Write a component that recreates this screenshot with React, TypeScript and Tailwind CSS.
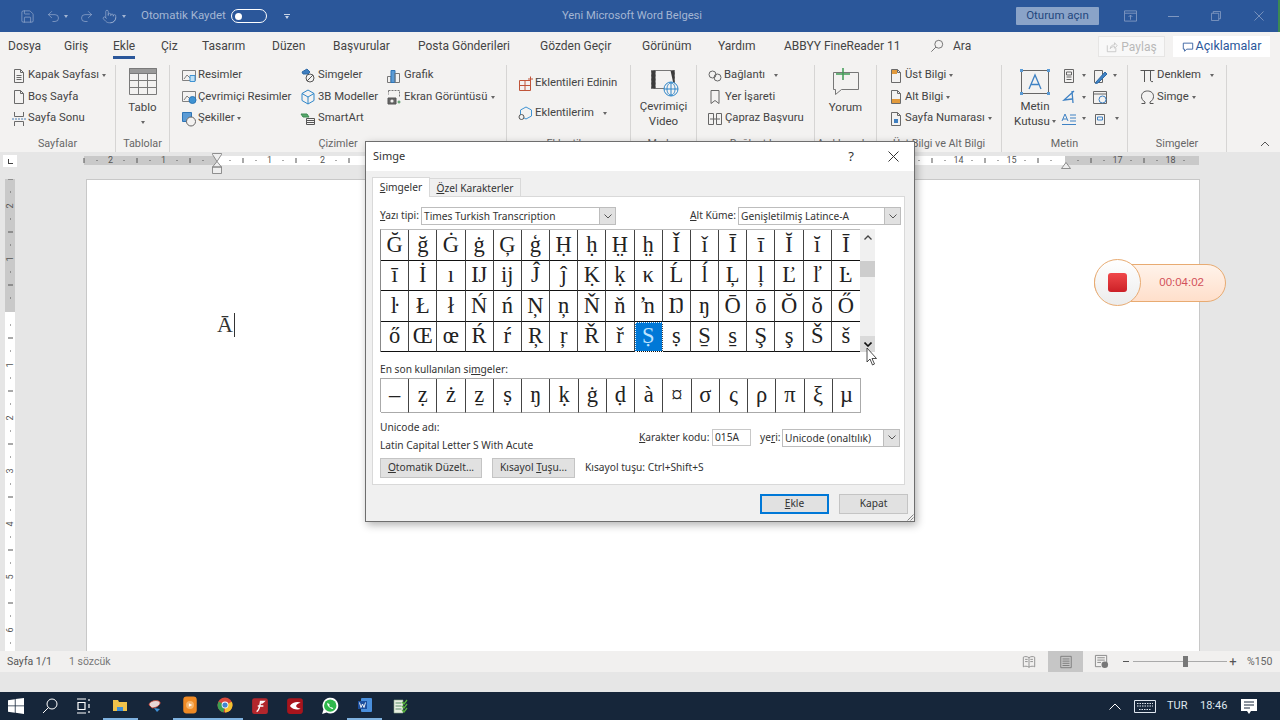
import type { ReactNode } from "react";
import { Pointer, Redo2, Save, Undo2 } from "lucide-react";

const tabs = [
  { label: "Dosya", w: "w-[56px]" },
  { label: "Giriş", w: "w-[49px]" },
  { label: "Ekle", w: "w-[48px]", active: true },
  { label: "Çiz", w: "w-[41px]" },
  { label: "Tasarım", w: "w-[70px]" },
  { label: "Düzen", w: "w-[61px]" },
  { label: "Başvurular", w: "w-[85px]" },
  { label: "Posta Gönderileri", w: "w-[122px]" },
  { label: "Gözden Geçir", w: "w-[102px]" },
  { label: "Görünüm", w: "w-[76px]" },
  { label: "Yardım", w: "w-[66px]" },
  { label: "ABBYY FineReader 11", w: "w-[146px]" },
];

const symbols = [
  "Ğ", "ğ", "Ġ", "ġ", "Ģ", "ģ", "Ḥ", "ḥ", "H̤", "h̤", "Ǐ", "ǐ", "Ī", "ī", "Ĭ", "ĭ", "Ī",
  "ī", "İ", "ı", "Ĳ", "ĳ", "Ĵ", "ĵ", "Ḳ", "ḳ", "κ", "Ĺ", "ĺ", "Ļ", "ļ", "Ľ", "ľ", "Ŀ",
  "ŀ", "Ł", "ł", "Ń", "ń", "Ņ", "ņ", "Ň", "ň", "ŉ", "Ŋ", "ŋ", "Ō", "ō", "Ŏ", "ŏ", "Ő",
  "ő", "Œ", "œ", "Ŕ", "ŕ", "Ŗ", "ŗ", "Ř", "ř", "Ṣ", "ṣ", "S̱", "s̱", "Ş", "ş", "Š", "š",
];
const recent = ["–", "ẓ", "ż", "ẕ", "ṣ", "ŋ", "ḳ", "ġ", "ḍ", "à", "¤", "σ", "ς", "ρ", "π", "ξ", "µ"];

function Ico({ children, className = "h-4 w-4" }: { children: ReactNode; className?: string }) {
  return (
    <svg viewBox="0 0 16 16" className={`shrink-0 ${className}`} fill="none" stroke="#6a6a6a" strokeWidth="1">
      {children}
    </svg>
  );
}

const Page = ({ fold = true }: { fold?: boolean }) => (
  <path d={fold ? "M3.5 1.5h6l3 3v10h-9z M9.5 1.5v3h3" : "M3.5 1.5h9v13h-9z"} />
);

function Caret({ className = "" }: { className?: string }) {
  return <span className={`inline-block h-0 w-0 border-x-[2.5px] border-t-[3px] border-x-transparent border-t-[#666] ${className}`} />;
}

function Row({ icon, label, caret, gap = "gap-[1px]", w }: { icon: ReactNode; label: string; caret?: "near" | "far"; gap?: string; w?: string }) {
  return (
    <div className={`flex h-[21.5px] items-center whitespace-nowrap ${gap} ${w ?? ""}`}>
      {icon}
      <span>{label}</span>
      {caret === "near" && <Caret className="ml-[2px]" />}
      {caret === "far" && <Caret className="ml-[8px]" />}
    </div>
  );
}

function Group({ w, label, children, cls = "" }: { w: string; label: string; children: ReactNode; cls?: string }) {
  return (
    <div className={`flex h-[87px] flex-col border-r border-[#d6d5d4] ${w}`}>
      <div className={`h-[71px] ${cls}`}>{children}</div>
      <div className="h-[16px] text-center text-[10.8px] leading-[16px] text-[#666]">{label}</div>
    </div>
  );
}

function TitleBar() {
  return (
    <div className="flex h-8 items-center border-r-2 border-[#3c8a52] bg-[#2b579a] text-[11.5px] text-[#a4b6d3]">
      <Save className="ml-[20px] h-[15px] w-[15px]" strokeWidth={1} />
      <Undo2 className="ml-[11px] h-[15px] w-[15px]" strokeWidth={1} />
      <Caret className="ml-[3px] border-t-[#a4b6d3]" />
      <Redo2 className="ml-[11px] h-[15px] w-[15px]" strokeWidth={1} />
      <Pointer className="ml-[8px] h-[15px] w-[15px]" strokeWidth={1} />
      <Caret className="ml-[5px] border-t-[#a4b6d3]" />
      <span className="ml-[15px] w-[90px] whitespace-nowrap">Otomatik Kaydet</span>
      <span className="flex h-[14px] w-[36px] items-center rounded-full border border-white pl-[3px]">
        <span className="h-[7px] w-[7px] rounded-full bg-white" />
      </span>
      <span className="ml-[16px] flex w-[8px] flex-col items-center gap-[1px]">
        <span className="h-px w-[6px] bg-[#c8d4e6]" />
        <Caret className="border-t-[#c8d4e6]" />
      </span>
      <span className="ml-[271px] w-[140px] whitespace-nowrap text-center text-[11.2px]">Yeni Microsoft Word Belgesi</span>
      <span className="ml-[314px] flex h-[18px] w-[83px] items-center justify-center rounded-[1px] bg-[#8aa3c8] text-[#23477e]">Oturum açın</span>
      <svg viewBox="0 0 14 12" className="ml-[25px] h-[12px] w-[13px]" fill="none" stroke="#7f97c0">
        <path d="M.5.5h13v11H.5z M.5 3h13 M7 10V5 M5 7l2-2 2 2" />
      </svg>
      <span className="ml-[31px] h-px w-[11px] bg-[#7f97c0]" />
      <svg viewBox="0 0 11 11" className="ml-[32px] h-[10px] w-[10px]" fill="none" stroke="#7f97c0">
        <path d="M.5 2.5h8v8h-8z M2.5 2.5v-2h8v8h-2" />
      </svg>
      <svg viewBox="0 0 11 11" className="ml-[33px] h-[10px] w-[10px]" fill="none" stroke="#7f97c0">
        <path d="M.5.5l10 10 M10.5.5l-10 10" />
      </svg>
    </div>
  );
}

function TabRow() {
  return (
    <div className="flex h-[30px] items-start bg-[#f3f2f1] pl-[8px] text-[12px] text-[#444]">
      {tabs.map((t) => (
        <div key={t.label} className={`flex pt-[7px] ${t.w}`}>
          <span className={`h-[20px] whitespace-nowrap leading-[14px] ${t.active ? "border-b-[3px] border-[#2b579a]" : ""}`}>{t.label}</span>
        </div>
      ))}
      <div className="flex items-center pt-[7px]">
        <svg viewBox="0 0 16 16" className="h-[14px] w-[14px]" fill="none" stroke="#666">
          <circle cx="10" cy="6" r="4.5" />
          <path d="M6.8 9.2L1.5 14.5" />
        </svg>
        <span className="ml-[9px] leading-[14px]">Ara</span>
      </div>
      <div className="ml-auto flex items-center gap-[8px] pr-[10px] pt-[4px]">
        <div className="flex h-[21px] w-[67px] items-center justify-center gap-[3px] border border-[#e6e5e4] bg-[#f8f8f8] text-[#b9b9b9]">
          <svg viewBox="0 0 14 14" className="h-[12px] w-[12px]" fill="none" stroke="#c4c4c4">
            <path d="M1.5 5v7.5h10V8 M5 9c0-3 2-4.500 5-4.500V2l3 3.500-3 3V6.500C8 6.500 6 7 5 9z" />
          </svg>
          Paylaş
        </div>
        <div className="flex h-[21px] w-[97px] items-center justify-center gap-[2px] bg-white text-[12.5px] text-[#2b579a]">
          <svg viewBox="0 0 14 14" className="h-[12px] w-[12px]" fill="none" stroke="#2b579a">
            <path d="M1.500 2.500h11v7h-7l-2.500 2.500v-2.500h-1.500z" />
          </svg>
          Açıklamalar
        </div>
      </div>
    </div>
  );
}

function Ribbon() {
  return (
    <div className="flex h-[90px] bg-[#f3f2f1] pt-[3px] text-[11.3px] text-[#444]">
      <Group w="w-[116px]" label="Sayfalar" cls="pl-[11px]">
        <Row label="Kapak Sayfası" caret="near" icon={<Ico><Page /><path d="M5.500 7.500h5 M5.500 9.500h5 M5.500 11.500h5" /></Ico>} />
        <Row label="Boş Sayfa" icon={<Ico><Page /></Ico>} />
        <Row label="Sayfa Sonu" icon={<Ico><path d="M3.500 1v4.500h9V1 M3.500 15v-4.500h9V15" /><path d="M1 8h14" strokeDasharray="2 1" stroke="#4a7fb5" /></Ico>} />
      </Group>

      <Group w="w-[54px]" label="Tablolar" cls="flex flex-col items-center pt-[3px]">
        <svg viewBox="0 0 28 27" className="h-[27px] w-[28px]" fill="none" stroke="#7a7a7a">
          <path d="M.5.5h27v26H.5z" />
          <path d="M.5.5h27v5H.5z" fill="#9a9a9a" />
          <path d="M9.500 5.500v21 M18.500 5.500v21 M.5 12.500h27 M.5 19.500h27" />
        </svg>
        <span className="mt-[4px] text-[11.5px] leading-[16px]">Tablo</span>
        <Caret className="mt-[6px]" />
      </Group>

      <Group w="w-[337px]" label="Çizimler" cls="flex pl-[11px]">
        <div className="w-[119px]">
          <Row label="Resimler" icon={<Ico><path d="M1.500 2.500h13v10h-13z" stroke="#808080" /><path d="M3 11l3-4 3 3" stroke="#808080" /><path d="M9 7.500h5v6H9z" fill="#bfe0f5" stroke="#3f93d3" /></Ico>} />
          <Row label="Çevrimiçi Resimler" icon={<Ico><path d="M1.500 2.500h13v10h-13z" stroke="#808080" /><path d="M3 11l3-4 3 3" stroke="#808080" /><circle cx="11.500" cy="11" r="3.500" fill="#3f93d3" stroke="#2c76b5" /></Ico>} />
          <Row label="Şekiller" caret="near" icon={<Ico><path d="M1.500 1.500h9v9h-9z" fill="#5b9bd5" stroke="#2e75b6" /><circle cx="10" cy="10.500" r="4.500" fill="#f3f2f1" stroke="#666" /></Ico>} />
        </div>
        <div className="w-[86px]">
          <Row label="Simgeler" gap="gap-[2px]" icon={<Ico><path d="M2 4l5-3 3 3-2 2H3z" fill="#3f7fc0" stroke="#2e6aa6" /><circle cx="10" cy="10" r="4" stroke="#555" /><path d="M7 13l6-6" stroke="#555" /></Ico>} />
          <Row label="3B Modeller" gap="gap-[2px]" icon={<Ico><path d="M8 1l6 3.500v7L8 15l-6-3.500v-7z" stroke="#2e86c9" /><path d="M2 4.500L8 8l6-3.500 M8 8v7" stroke="#2e86c9" /></Ico>} />
          <Row label="SmartArt" gap="gap-[2px]" icon={<Ico><path d="M1 3h6l2 3H3z" fill="#56a86a" stroke="#3e8a52" /><path d="M6.500 7.500h8v6h-8z M6.500 9.500h8 M6.500 11.500h8" stroke="#555" /></Ico>} />
        </div>
        <div>
          <Row label="Grafik" gap="gap-[2px]" icon={<Ico><path d="M1.500 8.500h3.500v6H1.500z" stroke="#777" /><path d="M5 2.500h4v12H5z" fill="#5b9bd5" stroke="#2e75b6" /><path d="M9 5.500h4.500v9H9z" stroke="#777" /></Ico>} />
          <Row label="Ekran Görüntüsü" caret="near" gap="gap-[2px]" icon={<Ico><path d="M2.500 1.500h11v6M2.500 1.500v4" strokeDasharray="2 1" stroke="#777" /><path d="M2 9h8v6H2z" fill="#666" stroke="#555" /><circle cx="6" cy="12" r="1.600" fill="#f3f2f1" stroke="none" /><path d="M11.500 13h3 M13 11.500v3" stroke="#3e8a52" /></Ico>} />
        </div>
      </Group>

      <Group w="w-[124px]" label="Eklentiler" cls="pl-[11px]">
        <div className="mt-[8px]">
          <Row label="Eklentileri Edinin" icon={<Ico><path d="M1.500 4.500h11v10h-11z M1.500 9.500h11 M7 4.500v10" stroke="#c0553a" /><path d="M12.500.5v5 M10 3h5" stroke="#c0553a" /></Ico>} />
        </div>
        <div className="mt-[8px]">
          <Row label="Eklentilerim" caret="far" icon={<Ico><path d="M8 2l5.500 3v6L8 14l-5.500-3V5z" stroke="#3f93d3" /><circle cx="3.500" cy="12" r="2.500" fill="#f3f2f1" stroke="#555" /></Ico>} />
        </div>
      </Group>

      <Group w="w-[66px]" label="Medya" cls="flex flex-col items-center pt-[4px]">
        <svg viewBox="0 0 30 28" className="h-[28px] w-[30px]" fill="none" stroke="#777">
          <path d="M2.500 1.500h23v18h-23z" />
          <path d="M2.500 1.500h4v18h-4z M21.500 1.500h4v18" fill="#3b3b3b" strokeDasharray="2 2" />
          <circle cx="22" cy="20" r="7" fill="#f3f2f1" stroke="#2e86c9" />
          <path d="M15 20h14 M22 13v14 M18 20c0-8 8-8 8 0s-8 8-8 0" stroke="#2e86c9" />
        </svg>
        <span className="mt-[2px] text-center text-[11.5px] leading-[15px]">Çevrimiçi<br />Video</span>
      </Group>

      <Group w="w-[118px]" label="Bağlantılar" cls="pl-[10px]">
        <Row label="Bağlantı" caret="far" icon={<Ico><circle cx="5.500" cy="6.500" r="3.500" stroke="#666" /><circle cx="10.500" cy="9.500" r="3.500" stroke="#666" /></Ico>} />
        <Row label="Yer İşareti" gap="gap-[2px]" icon={<Ico><path d="M4 1.500h8v13l-4-3-4 3z" stroke="#666" /></Ico>} />
        <Row label="Çapraz Başvuru" gap="gap-[2px]" icon={<Ico><path d="M1.500 2.500h5v11h-5z M9.500 2.500h5v11h-5z M3 8h10" stroke="#666" /></Ico>} />
      </Group>

      <Group w="w-[62px]" label="Açıklamalar" cls="flex flex-col items-center pt-[3px]">
        <svg viewBox="0 0 28 28" className="h-[28px] w-[28px]" fill="none" stroke="#777">
          <path d="M1.500 4.500h25v17h-17l-6 5v-5h-2z" />
          <path d="M11 0v12 M4 6h14" stroke="#3f9a54" strokeWidth="1.500" />
        </svg>
        <span className="mt-[3px] text-[11.5px] leading-[16px]">Yorum</span>
      </Group>

      <Group w="w-[125px]" label="Üst Bilgi ve Alt Bilgi" cls="pl-[11px]">
        <Row label="Üst Bilgi" caret="near" icon={<Ico><Page /><path d="M4 2h5v4H4z" fill="#e29a3c" stroke="none" /></Ico>} />
        <Row label="Alt Bilgi" caret="near" icon={<Ico><Page /><path d="M4 10h8v4H4z" fill="#e29a3c" stroke="none" /></Ico>} />
        <Row label="Sayfa Numarası" caret="near" icon={<Ico><Page /><path d="M6 8h4v4H6z" fill="#3f7fc0" stroke="none" /></Ico>} />
      </Group>

      <Group w="w-[126px]" label="Metin" cls="flex pl-[7px]">
        <div className="flex w-[52px] flex-col items-center pt-[3px]">
          <svg viewBox="0 0 32 28" className="h-[28px] w-[32px]" fill="none">
            <path d="M2.500 2.500h27v23h-27z" stroke="#666" />
            <rect x="1" y="1" width="3" height="3" fill="#5b9bd5" />
            <rect x="28" y="1" width="3" height="3" fill="#5b9bd5" />
            <rect x="1" y="24" width="3" height="3" fill="#5b9bd5" />
            <rect x="28" y="24" width="3" height="3" fill="#5b9bd5" />
            <path d="M10 21l6-14 6 14 M12 16.500h8" stroke="#3f82c4" strokeWidth="1.300" />
          </svg>
          <span className="mt-[3px] whitespace-nowrap text-center text-[11.5px] leading-[15px]">Metin<br />Kutusu<Caret className="mb-[2px] ml-[2px]" /></span>
        </div>
        <div className="flex w-[31px] flex-col">
          <div className="flex h-[21.5px] items-center gap-[5px]"><Ico><path d="M3.500 1.500h9v13h-9z M5.500 4h5v3h-5z M5.500 9h5 M5.500 11.500h5" stroke="#666" /></Ico><Caret /></div>
          <div className="flex h-[21.5px] items-center gap-[5px]"><Ico><path d="M13 2L3 11l8-1 M11 2l1 12" stroke="#3f82c4" strokeWidth="1.300" /></Ico><Caret /></div>
          <div className="flex h-[21.5px] items-center gap-[5px]"><Ico><path d="M1 10L4 3l3 7 M2 8h4 M9 4h6 M9 7h6 M9 10h6" stroke="#3f82c4" /><path d="M1 13.500h14" stroke="#3f82c4" /></Ico><Caret /></div>
        </div>
        <div className="flex flex-col">
          <div className="flex h-[21.5px] items-center gap-[5px]"><Ico><path d="M2.500 2.500h8v12h-8z" stroke="#666" /><path d="M4 14l9-10 2 2-9 9-2.500.5z" fill="#3f82c4" stroke="#2e6aa6" /></Ico><Caret /></div>
          <div className="flex h-[21.5px] items-center gap-[5px]"><Ico><path d="M1.500 2.500h13v12h-13z M1.500 5h13" stroke="#666" /><circle cx="10.500" cy="10.500" r="3.500" fill="#f3f2f1" stroke="#3f82c4" /></Ico></div>
          <div className="flex h-[21.5px] items-center gap-[7px]"><Ico><path d="M3.500 3.500h9v10h-9z" stroke="#666" /><path d="M5.500 6h5v3h-5z" stroke="#3f82c4" /></Ico><Caret /></div>
        </div>
      </Group>

      <Group w="w-[99px]" label="Simgeler" cls="pl-[11px]">
        <Row label="Denklem" caret="far" icon={<Ico className="h-[16px] w-[17px]"><path d="M1 2.500h14 M5 2.500V14 M11 2.500V12c0 1.500 1 2 2.500 1.500" stroke="#555" /></Ico>} />
        <Row label="Simge" caret="near" icon={<Ico className="h-[16px] w-[17px]"><path d="M2 14.500h3.500v-1.500C3 11.500 2 9.500 2 7.500 2 4 4.500 2 8 2s6 2 6 5.500c0 2-1 4-3.500 5.500v1.500H14" stroke="#555" /></Ico>} />
      </Group>

      <div className="ml-auto flex h-[87px] items-end pb-[5px] pr-[10px]">
        <svg viewBox="0 0 10 6" className="h-[6px] w-[10px]" fill="none" stroke="#555"><path d="M1 5l4-4 4 4" /></svg>
      </div>
    </div>
  );
}

function HRuler() {
  const cells = Array.from({ length: 84 }, (_, k) => k - 10);
  return (
    <div className="relative ml-[67px] mt-[4px] flex h-[9px]">
      {cells.map((i) => (
        <div key={i} className={`flex h-full w-[13.25px] items-center justify-start text-[9px] text-[#555] ${i < 0 || i >= 64 ? "bg-[#c9c9c9]" : "bg-white"}`}>
          {/* the marks from 11 to 52 sit behind the dialog, and 64 behind the indent marker */}
          {(i < 11 || i > 52) && i !== 64 && <RulerMark i={i} />}
        </div>
      ))}
      <div className="w-[2px] bg-[#c9c9c9]" />
      <svg viewBox="0 0 10 21" className="absolute left-[128px] top-[-3px] h-[21px] w-[10px]" fill="#eee" stroke="#777" strokeWidth="0.800">
        <path d="M.5.5h9v1L5 8.500.5 1.500z M5 8.500L9.500 14H.5z M.5 14h9v6.500h-9z" />
      </svg>
      <svg viewBox="0 0 10 7" className="absolute left-[977px] top-[6px] h-[7px] w-[10px]" fill="#eee" stroke="#777" strokeWidth="0.800">
        <path d="M5 .5L9.500 6.500H.5z" />
      </svg>
    </div>
  );
}

function RulerMark({ i, vertical }: { i: number; vertical?: boolean }) {
  const n = Math.abs(i) / 4;
  if (i === 0) return null;
  if (i % 4 === 0)
    return (
      <span className={`w-[10px] text-center leading-none ${vertical ? "-translate-y-1/2 -rotate-90" : "-translate-x-1/2"}`}>{n}</span>
    );
  if (Math.abs(i) % 4 === 2)
    return <span className={vertical ? "h-px w-[5px] -translate-y-1/2 bg-[#555]" : "h-[5px] w-px -translate-x-1/2 bg-[#555]"} />;
  return <span className={`h-px w-px bg-[#555] ${vertical ? "-translate-y-1/2" : "-translate-x-1/2"}`} />;
}

function VRuler() {
  const cells = Array.from({ length: 36 }, (_, k) => k - 10);
  return (
    <div className="flex h-[472px] w-[86px] flex-col overflow-hidden pl-[5px]">
      {cells.map((i) => (
        <div key={i} className={`flex h-[13.25px] w-[10px] shrink-0 items-start justify-center text-[9px] text-[#555] ${i < 0 ? "bg-[#c9c9c9]" : "bg-white"}`}>
          <RulerMark i={i} vertical />
        </div>
      ))}
    </div>
  );
}

function SymbolGrid({ items, selected, cellH, cls }: { items: string[]; selected?: number; cellH: string; cls: string }) {
  return (
    <div className={`grid grid-cols-[repeat(17,1fr)] font-['Liberation_Serif',serif] text-[22.5px] text-[#222] ${cls}`}>
      {items.map((c, i) => {
        const sel = i === selected;
        return (
          <div
            key={i}
            className={`flex items-center justify-center border-r border-b border-r-[#444] border-b-[#111] leading-none ${cellH} ${sel ? "bg-[#0078d7] text-[#bfe3ff] outline-1 -outline-offset-1 outline-dotted outline-white" : ""}`}
          >
            {c}
          </div>
        );
      })}
    </div>
  );
}

function Select({ value, w }: { value: string; w: string }) {
  return (
    <div className={`flex h-[18px] items-stretch border border-[#bdbdbd] bg-white ${w}`}>
      <span className="flex-1 whitespace-nowrap pl-[2px] leading-[16px]">{value}</span>
      <span className="flex w-[16px] items-center justify-center border-l border-[#bdbdbd] bg-[#e1e1e1]">
        <svg viewBox="0 0 8 5" className="h-[5px] w-[8px]" fill="none" stroke="#555"><path d="M.5.5L4 4 7.500.5" /></svg>
      </span>
    </div>
  );
}

function SymbolDialog() {
  return (
    <div className="absolute left-[365px] top-[141px] flex h-[381px] w-[550px] flex-col border border-[#6e6e6e] bg-[#f0f0f0] font-['Noto_Sans',sans-serif] text-[10.2px] text-[#333] shadow-[2px_3px_8px_rgba(0,0,0,0.3)]">
      <div className="flex h-[29px] items-center bg-white pl-[7px] pr-[15px] text-[11px]">
        <span>Simge</span>
        <span className="ml-auto text-[13px]">?</span>
        <svg viewBox="0 0 11 11" className="ml-[34px] h-[11px] w-[11px]" fill="none" stroke="#333"><path d="M.5.5l10 10 M10.500.5l-10 10" /></svg>
      </div>

      <div className="mt-[6px] flex h-[19px] pl-[6px]">
        <div className="z-10 h-[20px] w-[58px] border border-b-0 border-[#d9d9d9] bg-white text-center leading-[19px]"><u>S</u>imgeler</div>
        <div className="mt-[1px] w-[91px] border border-l-0 border-b-0 border-[#d9d9d9] text-center leading-[18px]"><u>Ö</u>zel Karakterler</div>
      </div>

      <div className="mx-[6px] h-[289px] w-[533px] border border-[#d9d9d9] bg-white pl-[7px]">
        <div className="mt-[10px] flex h-[18px] items-center">
          <span className="w-[41px] whitespace-nowrap"><u>Y</u>azı tipi:</span>
          <Select value="Times Turkish Transcription" w="w-[195px]" />
          <span className="ml-[74px] w-[48px] whitespace-nowrap"><u>A</u>lt Küme:</span>
          <Select value="Genişletilmiş Latince-A" w="w-[163px]" />
        </div>

        <div className="mt-[4px] flex">
          <SymbolGrid items={symbols} selected={60} cellH="h-[30.5px]" cls="h-[123px] w-[480px] border-l border-t border-l-[#888] border-t-[#bbb] [&>div:nth-child(17n)]:border-r-0" />
          <div className="flex h-[123px] w-[15px] flex-col items-center bg-[#f0f0f0]">
            <div className="flex h-[16px] items-center"><svg viewBox="0 0 8 5" className="h-[5px] w-[8px]" fill="none" stroke="#444" strokeWidth="1.300"><path d="M.5 4.500L4 1l3.500 3.500" /></svg></div>
            <div className="mt-[16px] h-[16px] w-full bg-[#cdcdcd]" />
            <div className="mt-auto flex h-[16px] w-full items-center justify-center bg-[#dadada]"><svg viewBox="0 0 8 5" className="h-[5px] w-[8px]" fill="none" stroke="#111" strokeWidth="1.600"><path d="M.5.5L4 4l3.500-3.500" /></svg></div>
          </div>
        </div>

        <div className="mt-[10px] h-[15px] leading-[15px]">En son kullanılan si<u>m</u>geler:</div>
        <SymbolGrid items={recent} cellH="h-[34px]" cls="mt-[1px] h-[34px] w-[481px] border-l border-t border-l-[#aaa] border-t-[#aaa] [&>div]:border-b-[#aaa] [&>div:last-child]:border-r-[#aaa]" />

        <div className="mt-[6px] flex h-[36px]">
          <div className="w-[259px] leading-[18px]">
            <div>Unicode adı:</div>
            <div>Latin Capital Letter S With Acute</div>
          </div>
          <div className="mt-[10px] flex h-[19px] items-center">
            <span className="w-[73px] whitespace-nowrap"><u>K</u>arakter kodu:</span>
            <span className="h-[17px] w-[39px] border border-[#c8c8c8] bg-white pl-[2px] leading-[15px]">015A</span>
            <span className="ml-[9px] w-[22px]">ye<u>r</u>i:</span>
            <Select value="Unicode (onaltılık)" w="w-[118px]" />
          </div>
        </div>

        <div className="mt-[4px] flex h-[20px] items-center">
          <span className="flex h-[20px] w-[102px] items-center justify-center border border-[#c4c4c4] bg-[#e1e1e1]"><span><u>O</u>tomatik Düzelt...</span></span>
          <span className="ml-[10px] flex h-[20px] w-[83px] items-center justify-center border border-[#c4c4c4] bg-[#e1e1e1]"><span>Kısayol <u>T</u>uşu...</span></span>
          <span className="ml-[10px]">Kısayol tuşu: Ctrl+Shift+S</span>
        </div>
      </div>

      <div className="mt-[9px] flex justify-end gap-[10px] pr-[6px]">
        <span className="flex h-[20px] w-[69px] items-center justify-center border-2 border-[#0078d7] bg-[#e1e1e1]"><u>E</u>kle</span>
        <span className="flex h-[20px] w-[69px] items-center justify-center border border-[#c4c4c4] bg-[#e1e1e1]">Kapat</span>
      </div>
      <svg viewBox="0 0 8 8" className="absolute bottom-0 right-0 h-[8px] w-[8px]" fill="none" stroke="#888"><path d="M7.500 1.500l-6 6 M7.500 4.500l-3 3" /></svg>

      <svg viewBox="0 0 12 19" className="absolute left-[500px] top-[205px] h-[19px] w-[12px]" fill="#fff" stroke="#222" strokeWidth="0.800">
        <path d="M1 1v14l3-3 2.500 6 2-1-2.500-5.500H10.500z" />
      </svg>
    </div>
  );
}

function Recorder() {
  return (
    <div className="absolute left-[1094px] top-[259px] flex h-[47px] w-[133px] items-center">
      <div className="flex h-[38px] w-[132px] items-center justify-end rounded-full border border-[#e8ab72] bg-gradient-to-b from-[#fff3ea] to-[#ffdfcb] pr-[21px] font-['Liberation_Sans',sans-serif] text-[11.5px] text-[#d2505a]">
        00:04:02
      </div>
      <div className="absolute left-0 top-0 flex h-[47px] w-[47px] items-center justify-center rounded-full border border-[#e8ab72] bg-gradient-to-b from-white to-[#ececec]">
        <span className="h-[19px] w-[19px] rounded-[3px] bg-gradient-to-b from-[#f0474a] to-[#cc1f26]" />
      </div>
    </div>
  );
}

function StatusBar() {
  return (
    <div className="flex h-[21px] items-center bg-[#f1f0ef] pl-[7px] text-[10.5px] text-[#555]">
      <span className="w-[62px]">Sayfa 1/1</span>
      <span className="text-[#777]">1 sözcük</span>
      <div className="ml-auto flex h-full items-center pr-[8px]">
        <Ico className="mr-[12px] h-[14px] w-[14px]"><path d="M8 3C6 1.500 3 1.500 1.500 2.500v11C3 12.500 6 12.500 8 14c2-1.500 5-1.500 6.500-.5v-11C13 1.500 10 1.500 8 3z M8 3v11 M3.500 5h3 M3.500 7.500h3 M9.500 5h3 M9.500 7.500h3" stroke="#888" /></Ico>
        <div className="flex h-full w-[35px] items-center justify-center bg-[#c6c6c6]">
          <Ico className="h-[14px] w-[14px]"><path d="M2 1.500h12v13H2z M4 4.500h8 M4 7h8 M4 9.500h8 M4 12h8" stroke="#777" /></Ico>
        </div>
        <Ico className="ml-[11px] h-[15px] w-[15px]"><path d="M1.500 1.500h12v9 M1.500 1.500v12h6 M3.500 4h8 M3.500 6.500h8 M3.500 9h4" stroke="#888" /><circle cx="11.500" cy="11.500" r="3.500" fill="#777" stroke="none" /></Ico>
        <span className="ml-[14px] h-[1.500px] w-[6px] bg-[#555]" />
        <div className="relative ml-[4px] flex h-[11px] w-[94px] items-center">
          <span className="h-px w-full bg-[#aaa]" />
          <span className="absolute left-[50px] top-0 h-[11px] w-[5px] bg-[#777]" />
        </div>
        <span className="ml-[2px] w-[8px] text-center text-[13px] leading-none">+</span>
        <span className="ml-[10px] w-[25px] whitespace-nowrap text-[#666]">%150</span>
      </div>
    </div>
  );
}

function TaskIcon({ children, on }: { children: ReactNode; on?: boolean }) {
  return (
    <div className={`flex h-full w-[34.900px] items-center justify-center ${on ? "border-b-2 border-[#7fb2e0]" : ""}`}>{children}</div>
  );
}

function Taskbar() {
  return (
    <div className="flex h-[28px] items-center bg-[#16263a] pr-[23px] text-[11px] text-[#dfe6ee]">
      <svg viewBox="0 0 16 16" className="ml-[8px] h-[16px] w-[16px]" fill="#fff"><path d="M0 2.200L6.800 1.200v6.300H0z M7.600 1.100L16 0v7.500H7.600z M0 8.300h6.800v6.400L0 13.800z M7.600 8.300H16V16l-8.400-1.200z" /></svg>
      <svg viewBox="0 0 16 16" className="ml-[18px] h-[16px] w-[16px]" fill="none" stroke="#fff"><circle cx="10" cy="6" r="5" /><path d="M6.500 9.500L1 15" /></svg>
      <svg viewBox="0 0 16 16" className="ml-[18px] h-[16px] w-[16px]" fill="none" stroke="#fff"><path d="M1 1h9 M1 15h9 M2 4.500h7v7H2z M13 1v2 M13 6v4 M13 13v2" strokeWidth="1.200" /></svg>
      <div className="ml-[11px] flex h-full">
        <TaskIcon on><svg viewBox="0 0 16 16" className="h-4 w-4"><path d="M1 3h5l1 2h8v9H1z" fill="#f0c24a" /><path d="M5 10h6v4H5z" fill="#3f8fd6" /></svg></TaskIcon>
        <TaskIcon><svg viewBox="0 0 16 16" className="h-4 w-4"><path d="M2 7c0-4 8-6 11-3 1 3-4 6-8 6z" fill="#e9d6d6" stroke="#c0392b" strokeWidth="0.800" /><path d="M7 10l6 1-3 3z" fill="#3f8fd6" /></svg></TaskIcon>
        <TaskIcon on><svg viewBox="0 0 16 16" className="h-[18px] w-[18px]"><rect x="2" y="0.500" width="12" height="15" rx="3" fill="#f08a24" /><circle cx="8" cy="8" r="3.500" fill="#f8b56a" /><path d="M7 6.500l3 1.500-3 1.500z" fill="#fff" /></svg></TaskIcon>
        <TaskIcon on><svg viewBox="0 0 16 16" className="h-4 w-4"><circle cx="8" cy="8" r="7.500" fill="#d9493c" /><path d="M8 8L1.500 4.500 .5 8a7.500 7.500 0 0 0 6 7.400z" fill="#3d9e50" /><path d="M8 8l6.800-3.200A7.500 7.500 0 0 1 8 15.500z" fill="#f2c230" /><circle cx="8" cy="8" r="3.400" fill="#fff" /><circle cx="8" cy="8" r="2.600" fill="#4285d0" /></svg></TaskIcon>
        <TaskIcon><svg viewBox="0 0 16 16" className="h-[18px] w-[18px]"><rect x="1" y="1" width="14" height="14" rx="2" fill="#b3262c" /><path d="M5 13c2-1 3-5 3.500-9h3c-1 1-2 1.500-2.500 1.500M6 8h5" fill="none" stroke="#fff" strokeWidth="1.300" /></svg></TaskIcon>
        <TaskIcon><svg viewBox="0 0 16 16" className="h-[18px] w-[18px]"><rect x="1" y="1" width="14" height="14" rx="2.500" fill="#a8141c" /><path d="M13 5C10 3.500 5 5 3.500 8c2 3 7 4 9.500 2.500-2-.5-4-1-4-2.500S11 5.500 13 5z" fill="#fff" /></svg></TaskIcon>
        <TaskIcon><svg viewBox="0 0 16 16" className="h-[18px] w-[18px]"><path d="M1 15l1.200-4A7 7 0 1 1 5 13.800z" fill="#fff" /><circle cx="8.200" cy="7.700" r="5.500" fill="#2eb84b" /><path d="M5.800 5c-.8 1 .2 3 1.600 4.200S10 11 11 10.200l-1.300-1.200-1 .4c-.6-.4-1.100-.9-1.400-1.600l.5-1z" fill="#fff" /></svg></TaskIcon>
        <TaskIcon on><svg viewBox="0 0 16 16" className="h-4 w-4"><rect x="4" y="1" width="11" height="14" rx="1" fill="#4a8fdc" /><rect x="1" y="4" width="9" height="8" fill="#1c4f9e" /><path d="M2.500 5.500L4 10.500l1.500-3.500L7 10.500l1.500-5" fill="none" stroke="#fff" strokeWidth="0.900" /></svg></TaskIcon>
        <TaskIcon><svg viewBox="0 0 16 16" className="h-4 w-4"><path d="M2 2h9v13H2z" fill="#e8efe2" stroke="#8aa78a" strokeWidth="0.600" /><path d="M3.500 5h6 M3.500 8h6 M3.500 11h6" stroke="#5a8f6a" /><path d="M10 4l2 2 3-4 M10 8l2 2 3-4 M10 12l2 2 3-4" fill="none" stroke="#55b33a" strokeWidth="1.300" /></svg></TaskIcon>
      </div>
      <div className="ml-auto flex items-center">
        <svg viewBox="0 0 12 7" className="h-[7px] w-[12px]" fill="none" stroke="#fff"><path d="M.5 6.500L6 1l5.500 5.500" /></svg>
        <svg viewBox="0 0 22 13" className="ml-[13px] h-[13px] w-[22px]" fill="none" stroke="#dfe6ee"><path d="M.5.5h21v12H.5z" /><path d="M3 3.500h16 M3 6h16 M5 9.500h12" strokeDasharray="1.500 1" /></svg>
        <span className="ml-[11px] w-[20px]">TUR</span>
        <span className="ml-[13px] w-[26px]">18:46</span>
        <svg viewBox="0 0 16 15" className="ml-[15px] h-[15px] w-[16px]" fill="#fff"><path d="M0 0h16v12h-6l-2 3-2-3H0z" /><path d="M3 3h10 M3 6h10 M3 9h6" stroke="#16263a" /></svg>
      </div>
    </div>
  );
}

export default function App() {
  return (
    <div className="relative flex h-[720px] w-[1280px] flex-col overflow-hidden bg-[#e6e6e6] font-['Roboto',sans-serif]">
      <TitleBar />
      <TabRow />
      <Ribbon />
      <div className="flex h-[27px] items-start">
        <div className="ml-[3px] mt-[3px] flex h-[12px] w-[14px] items-center justify-center bg-white">
          <span className="h-[5px] w-[5px] border-b-[1.500px] border-l-[1.500px] border-[#444]" />
        </div>
        <HRuler />
      </div>
      <div className="flex h-[472px]">
        <VRuler />
        <div className="h-full w-[1114px] border-l border-t border-r border-[#c8c8c8] bg-white pl-[130px] pt-[132px]">
          <div className="flex items-center font-['Liberation_Serif',serif] text-[22px] leading-[26px] text-[#333]">
            <span>Ā</span>
            <span className="ml-[1px] h-[24px] w-px bg-[#333]" />
          </div>
        </div>
      </div>
      <StatusBar />
      <div className="h-[20px]" />
      <Taskbar />
      <SymbolDialog />
      <Recorder />
    </div>
  );
}
